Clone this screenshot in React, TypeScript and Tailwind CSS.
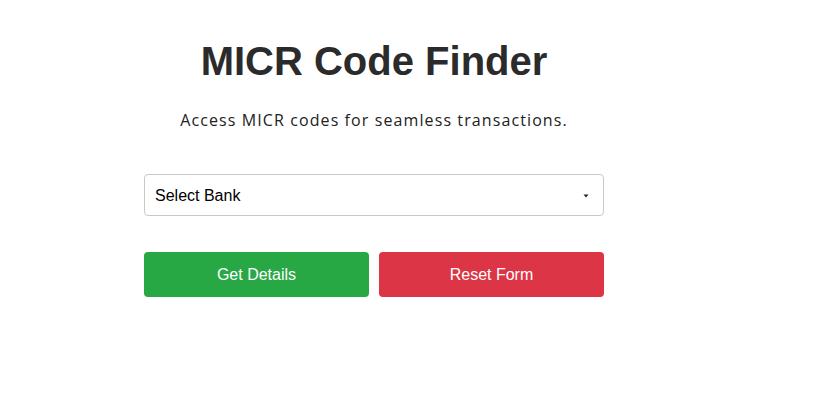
export default function App() {
  return (
    <div className="min-h-[406px] w-[838px] bg-white pl-[144px] pt-[37px]">
      <div className="flex w-[460px] flex-col">
        <h1 className="text-center text-[40px] leading-[48px] font-bold text-[#2b2b2b] [font-family:'Liberation_Sans',Arial,sans-serif]">
          MICR Code Finder
        </h1>
        <p className="mt-[23px] text-center text-[16px] leading-[24px] font-medium tracking-[1.1px] text-[#222] [font-family:'Open_Sans',sans-serif]">
          Access MICR codes for seamless transactions.
        </p>

        <div className="mt-[42px] flex h-[42px] items-center justify-between rounded-[4px] border border-[#c8c8c8] bg-white pt-[1px] pr-[14px] pl-[10px] [font-family:'Liberation_Sans',Arial,sans-serif]">
          <span className="text-[16px] text-black">Select Bank</span>
          <svg width="6" height="4" viewBox="0 0 6 4">
            <path d="M0.5 0.5 L5.5 0.5 L3 3.5 Z" fill="#222" />
          </svg>
        </div>

        <div className="mt-[36px] flex gap-[10px] [font-family:'Liberation_Sans',Arial,sans-serif]">
          <button className="h-[45px] flex-1 rounded-[4px] bg-[#28a745] text-[16px] text-white">
            Get Details
          </button>
          <button className="h-[45px] flex-1 rounded-[4px] bg-[#dc3545] text-[16px] text-white">
            Reset Form
          </button>
        </div>
      </div>
    </div>
  )
}
